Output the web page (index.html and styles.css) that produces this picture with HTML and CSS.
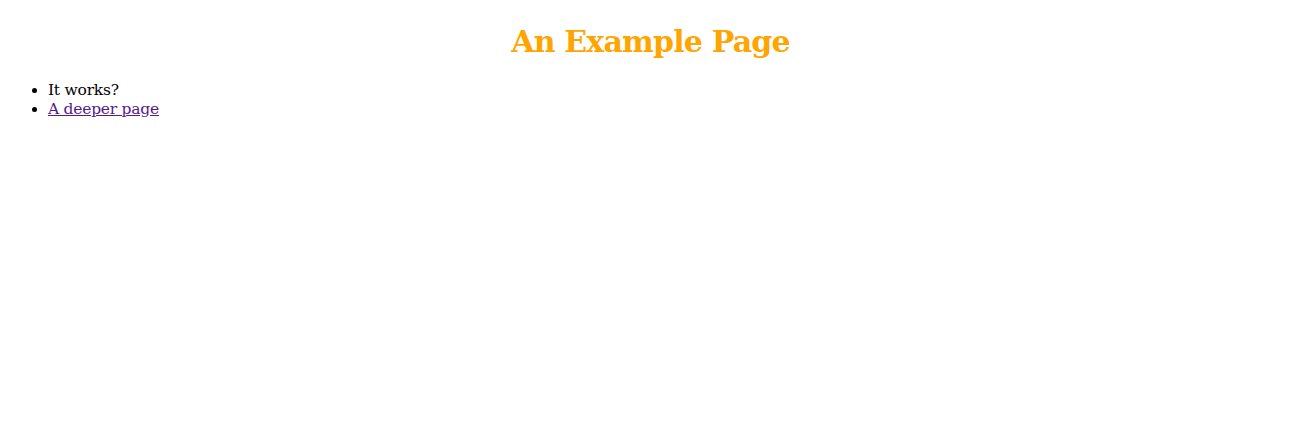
FILE: index.html
```html
<!DOCTYPE html>
<html>
<head>
<meta charset="utf-8">
<title>An Example Page</title>
<link rel="stylesheet" href="styles.css">
</head>
<body>
<h1 class="title">An Example Page</h1>
<ul class="links">
<li>It works?</li>
<li><a href="#deeper">A deeper page</a></li>
</ul>
</body>
</html>
```
FILE: styles.css
```css
body {
  margin: 8px;
  font-family: "DejaVu Serif", "Noto Serif", serif;
  font-size: 15.5px;
  color: #000;
  background: #fff;
}
.title {
  margin: 14.5px 0 21.44px;
  font-size: 30px;
  line-height: 37px;
  letter-spacing: -0.8px;
  font-weight: bold;
  color: orange;
  text-align: center;
}
.links {
  margin: 16px 0;
  padding-left: 40px;
  line-height: 19px;
  letter-spacing: -0.25px;
}
.links a {
  color: #551a8b;
}
```
